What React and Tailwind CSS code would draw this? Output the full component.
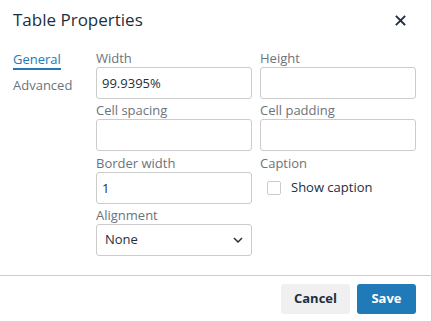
export default function App() {
  const label = "h-[20px] pt-[3px] text-[13px] leading-[17px] text-[#6d737b]";
  const input =
    "h-[32px] w-full rounded-[3px] border border-[#cccccc] bg-white px-[5px] text-[13px] text-[#222f3e] outline-none";
  return (
    <div
      className="flex h-[321px] w-[432px] flex-col border-r border-[#cccccc] bg-white text-[#222f3e]"
      style={{ fontFamily: '"Open Sans", sans-serif' }}
    >
      <div className="flex h-[47px] items-start justify-between pl-[13px] pr-[25px] pt-[8px]">
        <div className="text-[17px] leading-[24px]">Table Properties</div>
        <button className="mt-[7px] text-[#222f3e]">
          <svg width="11" height="11" viewBox="0 0 11 11">
            <path d="M1.5 1.5 L9.5 9.5 M9.5 1.5 L1.5 9.5" stroke="currentColor" strokeWidth="1.8" strokeLinecap="square" />
          </svg>
        </button>
      </div>

      <div className="flex flex-1 items-start pl-[13px] pr-[15px]">
        <div className="w-[83px] pt-[3px] text-[13px]">
          <div className="inline-block border-b-2 border-[#207ab7] leading-[17px] text-[#207ab7]">General</div>
          <div className="mt-[7px] leading-[17px] text-[#6d737b]">Advanced</div>
        </div>

        <div className="grid flex-1 grid-cols-2 content-start gap-x-[8px]">
          <div>
            <div className={label}>Width</div>
            <input className={input} defaultValue="99.9395%" />
          </div>
          <div>
            <div className={label}>Height</div>
            <input className={input} />
          </div>
          <div>
            <div className={label}>Cell spacing</div>
            <input className={input} />
          </div>
          <div>
            <div className={label}>Cell padding</div>
            <input className={input} />
          </div>
          <div>
            <div className="h-[21px] pt-[4px] text-[13px] leading-[17px] text-[#6d737b]">Border width</div>
            <input className={input} defaultValue="1" />
          </div>
          <div>
            <div className="h-[21px] pt-[4px] text-[13px] leading-[17px] text-[#6d737b]">Caption</div>
            <label className="flex h-[32px] items-center gap-[10px] pl-[7px]">
              <span className="h-[14px] w-[14px] rounded-[2px] border border-[#cccccc] bg-white" />
              <span className="text-[13px] text-[#222f3e]">Show caption</span>
            </label>
          </div>
          <div>
            <div className={label}>Alignment</div>
            <div className={input + " flex items-center justify-between pl-[8px] pr-[8px]"}>
              <span>None</span>
              <svg width="10" height="6" viewBox="0 0 10 6">
                <path d="M1 1 L5 5 L9 1" fill="none" stroke="#222f3e" strokeWidth="1.5" />
              </svg>
            </div>
          </div>
        </div>
      </div>

      <div className="flex h-[46px] items-center justify-end gap-[7px] border-t border-[#cccccc] pr-[15px]">
        <button className="h-[30px] w-[69px] rounded-[3px] bg-[#f0f0f0] text-[13px] font-bold text-[#222f3e]">Cancel</button>
        <button className="h-[30px] w-[59px] rounded-[3px] bg-[#207ab7] text-[13px] font-bold text-white">Save</button>
      </div>
    </div>
  );
}
